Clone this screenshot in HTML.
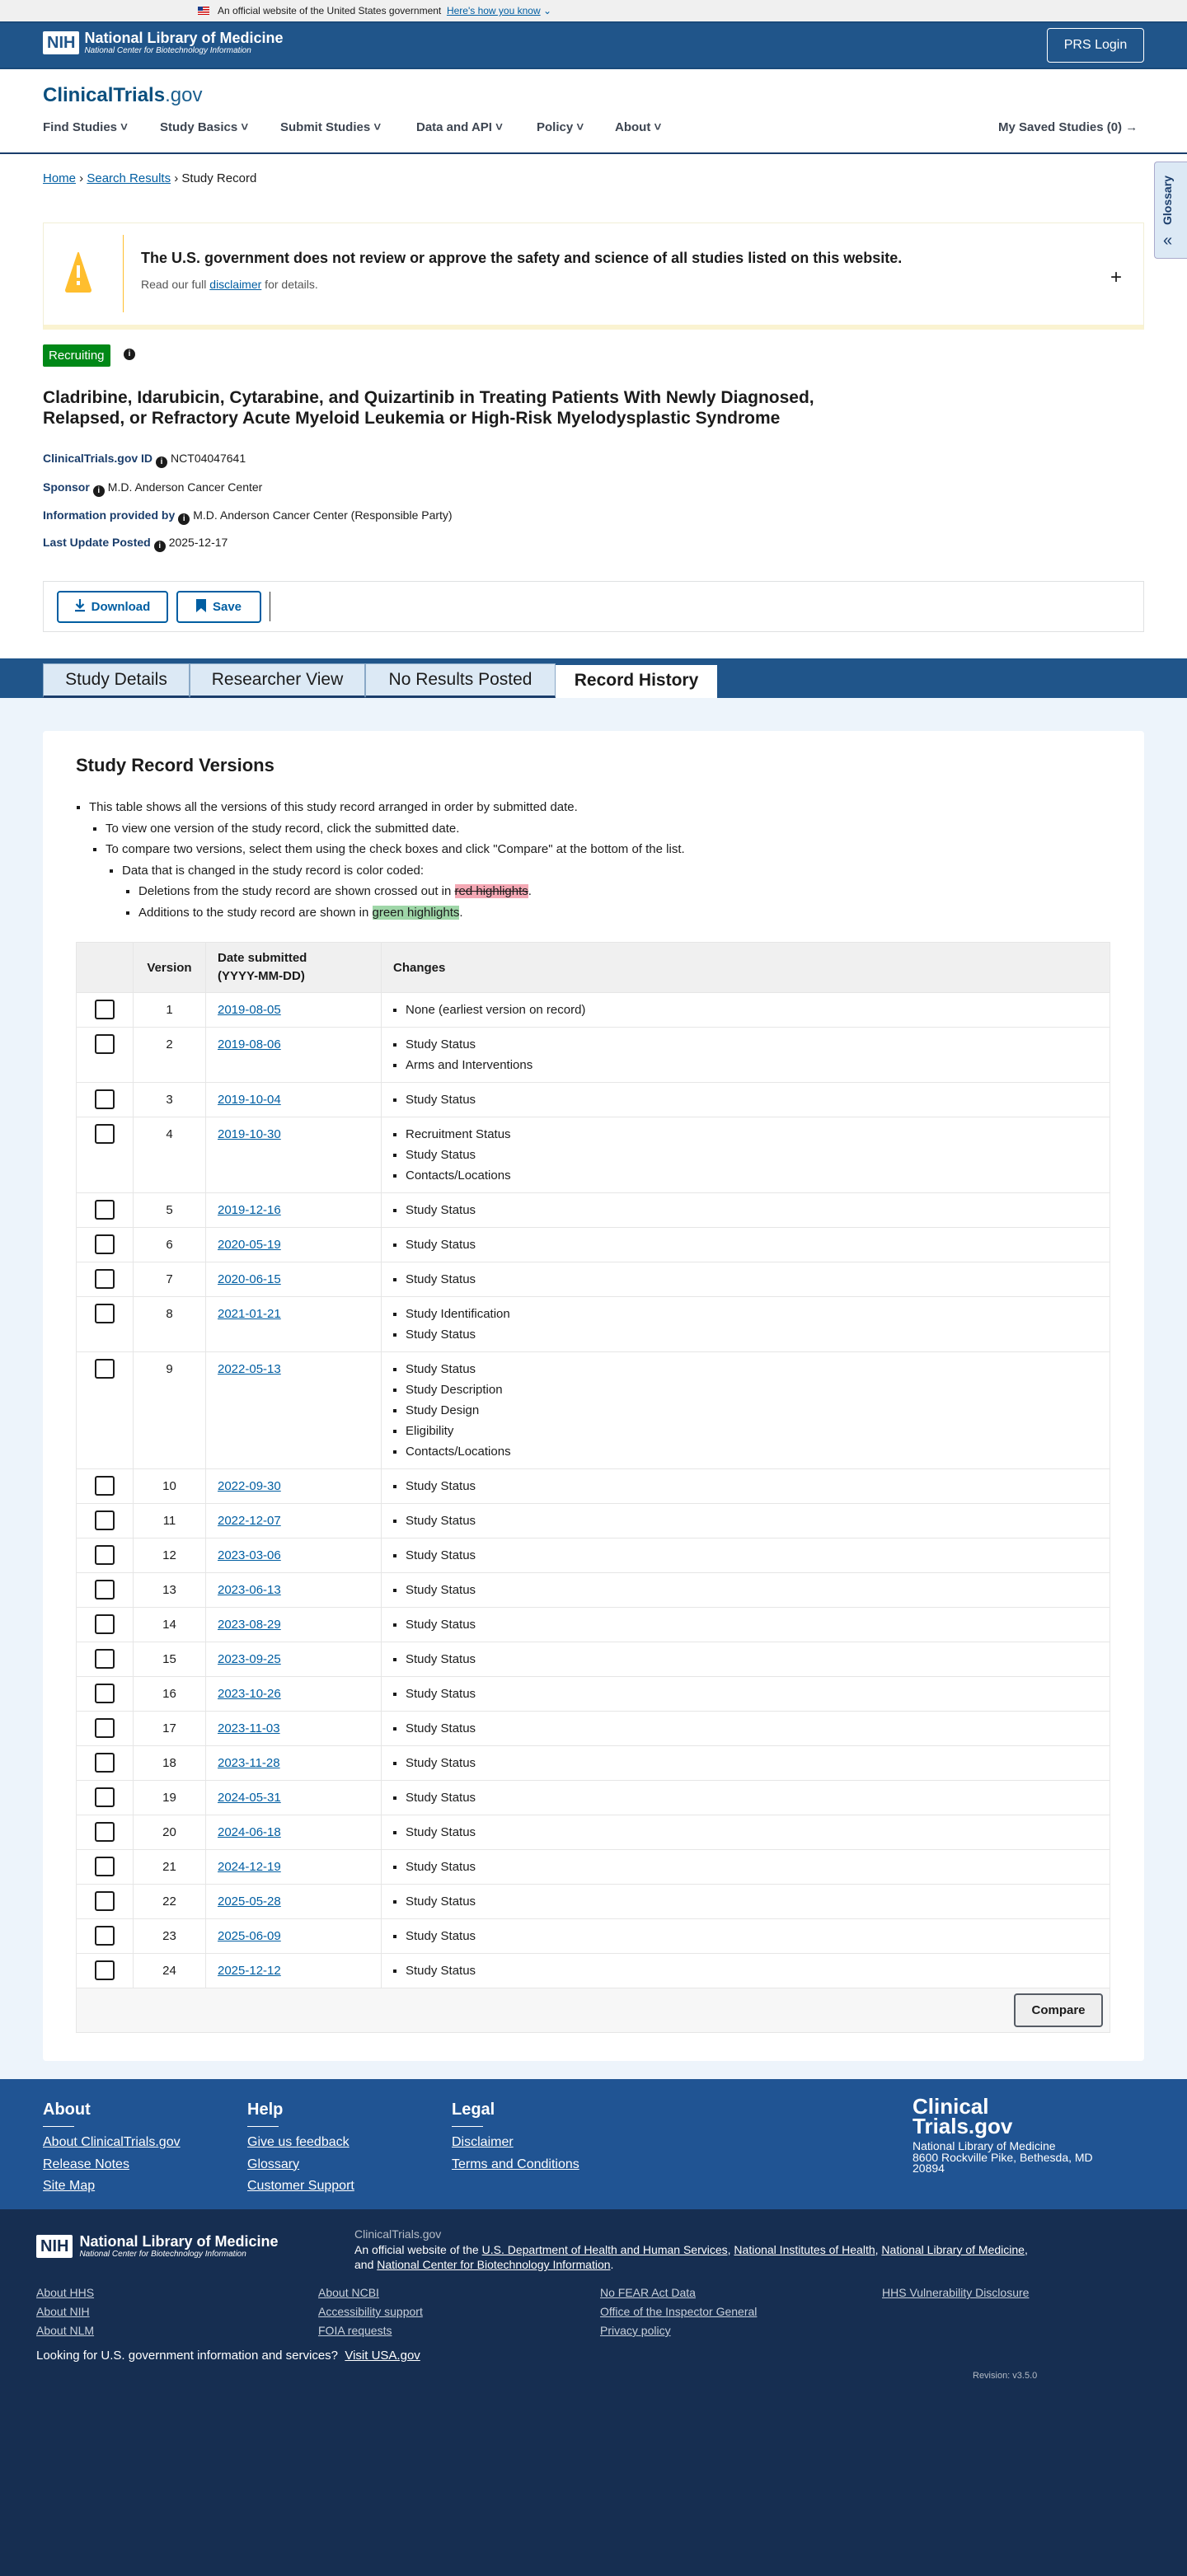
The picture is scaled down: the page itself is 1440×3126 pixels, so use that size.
<!DOCTYPE html>
<html><head><meta charset="utf-8"><style>
*{box-sizing:border-box;margin:0;padding:0}
body{width:1440px;height:3126px;font-family:"Liberation Sans",Arial,sans-serif;color:#1b1b1b;background:#fff;position:relative;overflow:hidden}
a{color:#005ea2;text-decoration:underline}
.abs{position:absolute}
.gov{height:26px;background:#f0f0f0;font-size:12px;display:flex;align-items:center;padding-left:240px}
.nlm{height:58px;background:#20558a;position:relative;border-top:2px solid #1a4a7a;border-bottom:2px solid #1a4a7a}
.nihbox{display:inline-block;background:#fff;color:#20558a;font-weight:bold;font-size:20px;padding:2px 5px;border-radius:2px;line-height:24px}
.nav span{position:absolute;top:146px;font-size:15px;color:#3d4551;font-weight:bold}
.lab{color:#1a3d6b;font-weight:bold;font-size:14px}
.info{display:inline-block;width:14px;height:14px;border-radius:50%;background:#1b1b1b;color:#fff;font-size:10px;text-align:center;line-height:14px;font-weight:bold;vertical-align:-2px;margin:0 4px}
.meta{position:absolute;left:52px;font-size:14px}
.tab{position:absolute;top:805px;height:42px;background:#dce9f5;border:1px solid #8aa9c7;border-bottom:3px solid #1a3d6b;font-size:21px;color:#1b1b1b;text-align:center;line-height:38px}
table{border-collapse:collapse;width:1255px;font-size:15px}
td,th{border:1px solid #e6e6e6;vertical-align:top;padding:8px 14px;line-height:25px;height:25px;text-align:left}
th{background:#f0f0f0;vertical-align:middle;font-size:15px}
td:nth-child(2),th:nth-child(2){text-align:center}
td ul{list-style:square;padding-left:15px}
.cb{display:block;width:24px;height:24px;border:2px solid #1b1b1b;border-radius:3px;margin-left:8px}
.fl a{color:#fff;font-size:16px;line-height:18px;display:block;margin-bottom:8.7px}
.dk a{color:#c9d1dc;font-size:14px;display:block;margin-bottom:7px}
</style></head><body>
<div class="gov"><span style="display:inline-block;width:14px;height:10px;background:repeating-linear-gradient(#c00 0 1.5px,#fff 1.5px 3px);position:relative;margin-right:10px"><span style="position:absolute;left:0;top:0;width:6px;height:5px;background:#1a3d8b"></span></span>An official website of the United States government&nbsp;&nbsp;<a style="font-size:12px">Here's how you know</a>&nbsp;<span style="color:#005ea2">⌄</span></div>
<div class="nlm">
 <div class="abs" style="left:52px;top:8px;display:flex;align-items:center;color:#fff"><span class="nihbox">NIH</span><div style="margin-left:6px"><div style="font-size:18px;font-weight:bold;line-height:20px">National Library of Medicine</div><div style="font-size:10px;font-style:italic">National Center for Biotechnology Information</div></div></div>
 <div class="abs" style="right:52px;top:6px;width:118px;height:42px;border:1px solid #fff;border-radius:4px;color:#fff;font-size:16px;text-align:center;line-height:40px">PRS Login</div>
</div>
<div class="abs" style="left:52px;top:102px;font-size:24px;font-weight:bold;color:#0b4f7e">ClinicalTrials<span style="font-weight:normal;color:#1b5f8f">.gov</span></div>
<div class="nav">
<span style="left:52px">Find Studies ˅</span><span style="left:194px">Study Basics ˅</span><span style="left:340px">Submit Studies ˅</span><span style="left:505px">Data and API ˅</span><span style="left:651px">Policy ˅</span><span style="left:746px">About ˅</span><span style="left:1211px;font-weight:bold">My Saved Studies (0) →</span>
</div>
<div class="abs" style="left:0;top:185px;width:1440px;height:2px;background:#1a3d6b"></div>
<div class="abs" style="left:52px;top:208px;font-size:15px"><a>Home</a> › <a>Search Results</a> › Study Record</div>
<div class="abs" style="left:1400px;top:196px;width:40px;height:118px;background:#dce9f5;border:1px solid #aac;border-right:none;border-radius:4px 0 0 4px;"><div style="transform:rotate(-90deg);position:absolute;left:-15px;top:38px;font-weight:bold;font-size:14px;color:#1a3d6b">Glossary</div><div style="position:absolute;left:10px;top:84px;font-size:20px;color:#1a3d6b">«</div></div>
<div class="abs" style="left:52px;top:270px;width:1336px;height:130px;border:1px solid #f1efd6;border-bottom:6px solid #faf3d1;background:#fff">
 <div class="abs" style="left:96px;top:14px;width:1px;height:94px;background:#ffbe2e"></div>
 <svg class="abs" style="left:26px;top:34px" width="32" height="50" viewBox="0 0 32 50"><path d="M16 2 L31 47 Q31 49 29 49 L3 49 Q1 49 1 47Z" fill="#ffbe2e" stroke="#ffbe2e" stroke-linejoin="round" stroke-width="2"/><rect x="14" y="17" width="4" height="15" fill="#fff"/><rect x="14" y="36" width="4" height="5" fill="#fff"/></svg>
 <div class="abs" style="left:118px;top:32px;font-size:18px;font-weight:bold">The U.S. government does not review or approve the safety and science of all studies listed on this website.</div>
 <div class="abs" style="left:118px;top:66px;font-size:14px;color:#555">Read our full <a>disclaimer</a> for details.</div>
 <div class="abs" style="left:1294px;top:52px;font-size:24px">+</div>
</div>
<div class="abs" style="left:52px;top:418px;height:27px;padding:0 7px;background:#008817;color:#fff;font-size:15px;line-height:27px;border-radius:2px">Recruiting</div>
<span class="info abs" style="left:146px;top:423px">i</span>
<div class="abs" style="left:52px;top:470px;font-size:21px;font-weight:bold;line-height:25px">Cladribine, Idarubicin, Cytarabine, and Quizartinib in Treating Patients With Newly Diagnosed,<br>Relapsed, or Refractory Acute Myeloid Leukemia or High-Risk Myelodysplastic Syndrome</div>
<div class="meta" style="top:548px"><span class="lab">ClinicalTrials.gov ID</span><span class="info">i</span>NCT04047641</div>
<div class="meta" style="top:583px"><span class="lab">Sponsor</span><span class="info">i</span>M.D. Anderson Cancer Center</div>
<div class="meta" style="top:617px"><span class="lab">Information provided by</span><span class="info">i</span>M.D. Anderson Cancer Center (Responsible Party)</div>
<div class="meta" style="top:650px"><span class="lab">Last Update Posted</span><span class="info">i</span>2025-12-17</div>
<div class="abs" style="left:52px;top:705px;width:1336px;height:62px;border:1px solid #dfe1e2">
 <div class="abs" style="left:16px;top:11px;width:135px;height:39px;border:2px solid #005ea2;border-radius:4px;color:#005ea2;font-weight:bold;font-size:15px;line-height:35px;text-align:center"><svg width="12" height="16" style="vertical-align:-2px;margin-right:8px" viewBox="0 0 12 16"><path d="M6 0V10M1.5 6L6 10.5L10.5 6" stroke="#005ea2" stroke-width="2.2" fill="none"/><rect x="0" y="13" width="12" height="2.2" fill="#005ea2"/></svg>Download</div>
 <div class="abs" style="left:161px;top:11px;width:103px;height:39px;border:2px solid #005ea2;border-radius:4px;color:#005ea2;font-weight:bold;font-size:15px;line-height:35px;text-align:center"><svg width="12" height="16" style="vertical-align:-2px;margin-right:8px"><path d="M0 0H12V16L6 11L0 16Z" fill="#005ea2"/></svg>Save</div>
 <div class="abs" style="left:274px;top:12px;width:1px;height:36px;background:#333"></div>
</div>
<div class="abs" style="left:0;top:799px;width:1440px;height:48px;background:#20558a"></div>
<div class="tab" style="left:52px;width:178px">Study Details</div>
<div class="tab" style="left:230px;width:213px">Researcher View</div>
<div class="tab" style="left:443px;width:231px">No Results Posted</div>
<div class="tab" style="left:674px;width:196px;background:#fff;border:none;border-top:4px solid #20558a;top:803px;height:44px;font-weight:bold">Record History</div>
<div class="abs" style="left:0;top:847px;width:1440px;height:1676px;background:#edf4fb"></div>
<div class="abs" style="left:52px;top:887px;width:1336px;height:1614px;background:#fff;border-radius:4px">
 <div class="abs" style="left:40px;top:29px;font-size:22px;font-weight:bold">Study Record Versions</div>
 <div class="abs" style="left:40px;top:80px;font-size:15px;line-height:25.5px">
  <ul style="list-style:square;padding-left:16px"><li>This table shows all the versions of this study record arranged in order by submitted date.
   <ul style="list-style:square;padding-left:20px"><li>To view one version of the study record, click the submitted date.</li><li>To compare two versions, select them using the check boxes and click "Compare" at the bottom of the list.
    <ul style="list-style:square;padding-left:20px"><li>Data that is changed in the study record is color coded:
     <ul style="list-style:square;padding-left:20px"><li>Deletions from the study record are shown crossed out in <span style="background:#f4a8b4;text-decoration:line-through">red highlights</span>.</li><li>Additions to the study record are shown in <span style="background:#9fd6a8">green highlights</span>.</li></ul></li></ul></li></ul></li></ul>
 </div>
 <div class="abs" style="left:40px;top:256px">
 <table>
 <tr><th style="width:69px;height:61px"></th><th style="width:88px">Version</th><th style="width:213px;line-height:22px">Date submitted<br>(YYYY-MM-DD)</th><th>Changes</th></tr>
 <tr><td><span class="cb"></span></td><td>1</td><td><a>2019-08-05</a></td><td><ul><li>None (earliest version on record)</li></ul></td></tr>
 <tr><td><span class="cb"></span></td><td>2</td><td><a>2019-08-06</a></td><td><ul><li>Study Status</li><li>Arms and Interventions</li></ul></td></tr>
 <tr><td><span class="cb"></span></td><td>3</td><td><a>2019-10-04</a></td><td><ul><li>Study Status</li></ul></td></tr>
 <tr><td><span class="cb"></span></td><td>4</td><td><a>2019-10-30</a></td><td><ul><li>Recruitment Status</li><li>Study Status</li><li>Contacts/Locations</li></ul></td></tr>
 <tr><td><span class="cb"></span></td><td>5</td><td><a>2019-12-16</a></td><td><ul><li>Study Status</li></ul></td></tr>
 <tr><td><span class="cb"></span></td><td>6</td><td><a>2020-05-19</a></td><td><ul><li>Study Status</li></ul></td></tr>
 <tr><td><span class="cb"></span></td><td>7</td><td><a>2020-06-15</a></td><td><ul><li>Study Status</li></ul></td></tr>
 <tr><td><span class="cb"></span></td><td>8</td><td><a>2021-01-21</a></td><td><ul><li>Study Identification</li><li>Study Status</li></ul></td></tr>
 <tr><td><span class="cb"></span></td><td>9</td><td><a>2022-05-13</a></td><td><ul><li>Study Status</li><li>Study Description</li><li>Study Design</li><li>Eligibility</li><li>Contacts/Locations</li></ul></td></tr>
 <tr><td><span class="cb"></span></td><td>10</td><td><a>2022-09-30</a></td><td><ul><li>Study Status</li></ul></td></tr>
 <tr><td><span class="cb"></span></td><td>11</td><td><a>2022-12-07</a></td><td><ul><li>Study Status</li></ul></td></tr>
 <tr><td><span class="cb"></span></td><td>12</td><td><a>2023-03-06</a></td><td><ul><li>Study Status</li></ul></td></tr>
 <tr><td><span class="cb"></span></td><td>13</td><td><a>2023-06-13</a></td><td><ul><li>Study Status</li></ul></td></tr>
 <tr><td><span class="cb"></span></td><td>14</td><td><a>2023-08-29</a></td><td><ul><li>Study Status</li></ul></td></tr>
 <tr><td><span class="cb"></span></td><td>15</td><td><a>2023-09-25</a></td><td><ul><li>Study Status</li></ul></td></tr>
 <tr><td><span class="cb"></span></td><td>16</td><td><a>2023-10-26</a></td><td><ul><li>Study Status</li></ul></td></tr>
 <tr><td><span class="cb"></span></td><td>17</td><td><a>2023-11-03</a></td><td><ul><li>Study Status</li></ul></td></tr>
 <tr><td><span class="cb"></span></td><td>18</td><td><a>2023-11-28</a></td><td><ul><li>Study Status</li></ul></td></tr>
 <tr><td><span class="cb"></span></td><td>19</td><td><a>2024-05-31</a></td><td><ul><li>Study Status</li></ul></td></tr>
 <tr><td><span class="cb"></span></td><td>20</td><td><a>2024-06-18</a></td><td><ul><li>Study Status</li></ul></td></tr>
 <tr><td><span class="cb"></span></td><td>21</td><td><a>2024-12-19</a></td><td><ul><li>Study Status</li></ul></td></tr>
 <tr><td><span class="cb"></span></td><td>22</td><td><a>2025-05-28</a></td><td><ul><li>Study Status</li></ul></td></tr>
 <tr><td><span class="cb"></span></td><td>23</td><td><a>2025-06-09</a></td><td><ul><li>Study Status</li></ul></td></tr>
 <tr><td><span class="cb"></span></td><td>24</td><td><a>2025-12-12</a></td><td><ul><li>Study Status</li></ul></td></tr>
 <tr><td colspan="4" style="background:#f7f7f7;height:41px;text-align:right;padding:6px 8px"><span style="display:inline-block;width:108px;height:41px;border:2px solid #565c65;border-radius:4px;background:#eee;font-weight:bold;font-size:15px;text-align:center;line-height:37px;vertical-align:top">Compare</span></td></tr>
 </table></div>
</div>
<div class="abs" style="left:0;top:2523px;width:1440px;height:158px;background:#205493"></div>
<div class="abs fl" style="left:52px;top:2549px;color:#fff"><div style="font-size:20px;font-weight:bold;line-height:22px">About</div><div style="width:38px;height:1px;background:#fff;margin:9px 0 10px"></div><a>About ClinicalTrials.gov</a><a>Release Notes</a><a>Site Map</a></div>
<div class="abs fl" style="left:300px;top:2549px;color:#fff"><div style="font-size:20px;font-weight:bold;line-height:22px">Help</div><div style="width:38px;height:1px;background:#fff;margin:9px 0 10px"></div><a>Give us feedback</a><a>Glossary</a><a>Customer Support</a></div>
<div class="abs fl" style="left:548px;top:2549px;color:#fff"><div style="font-size:20px;font-weight:bold;line-height:22px">Legal</div><div style="width:38px;height:1px;background:#fff;margin:9px 0 10px"></div><a>Disclaimer</a><a>Terms and Conditions</a></div>
<div class="abs" style="left:1107px;top:2544px;color:#fff"><div style="font-size:26px;font-weight:bold;line-height:24px">Clinical<br>Trials.gov</div><div style="font-size:14px;line-height:13.5px;margin-top:6px">National Library of Medicine<br>8600 Rockville Pike, Bethesda, MD<br>20894</div></div>
<div class="abs" style="left:0;top:2681px;width:1440px;height:445px;background:#162e51"></div>
<div class="abs" style="left:44px;top:2710px;display:flex;align-items:center;color:#fff"><span class="nihbox" style="color:#162e51">NIH</span><div style="margin-left:8px"><div style="font-size:18px;font-weight:bold;line-height:20px">National Library of Medicine</div><div style="font-size:10px;font-style:italic">National Center for Biotechnology Information</div></div></div>
<div class="abs" style="left:430px;top:2702px;color:#fff;font-size:14px;line-height:18.5px;width:960px"><div style="color:#b5bcc6">ClinicalTrials.gov</div>An official website of the <a style="color:#fff">U.S. Department of Health and Human Services</a>, <a style="color:#fff">National Institutes of Health</a>, <a style="color:#fff">National Library of Medicine</a>,<br>and <a style="color:#fff">National Center for Biotechnology Information</a>.</div>
<div class="abs dk" style="left:44px;top:2774px"><a>About HHS</a><a>About NIH</a><a>About NLM</a></div>
<div class="abs dk" style="left:386px;top:2774px"><a>About NCBI</a><a>Accessibility support</a><a>FOIA requests</a></div>
<div class="abs dk" style="left:728px;top:2774px"><a>No FEAR Act Data</a><a>Office of the Inspector General</a><a>Privacy policy</a></div>
<div class="abs dk" style="left:1070px;top:2774px"><a>HHS Vulnerability Disclosure</a></div>
<div class="abs" style="left:44px;top:2850px;color:#fff;font-size:15px">Looking for U.S. government information and services?&nbsp; <a style="color:#fff">Visit USA.gov</a></div>
<div class="abs" style="left:1180px;top:2877px;color:#b5bcc6;font-size:11px">Revision: v3.5.0</div>
</body></html>
